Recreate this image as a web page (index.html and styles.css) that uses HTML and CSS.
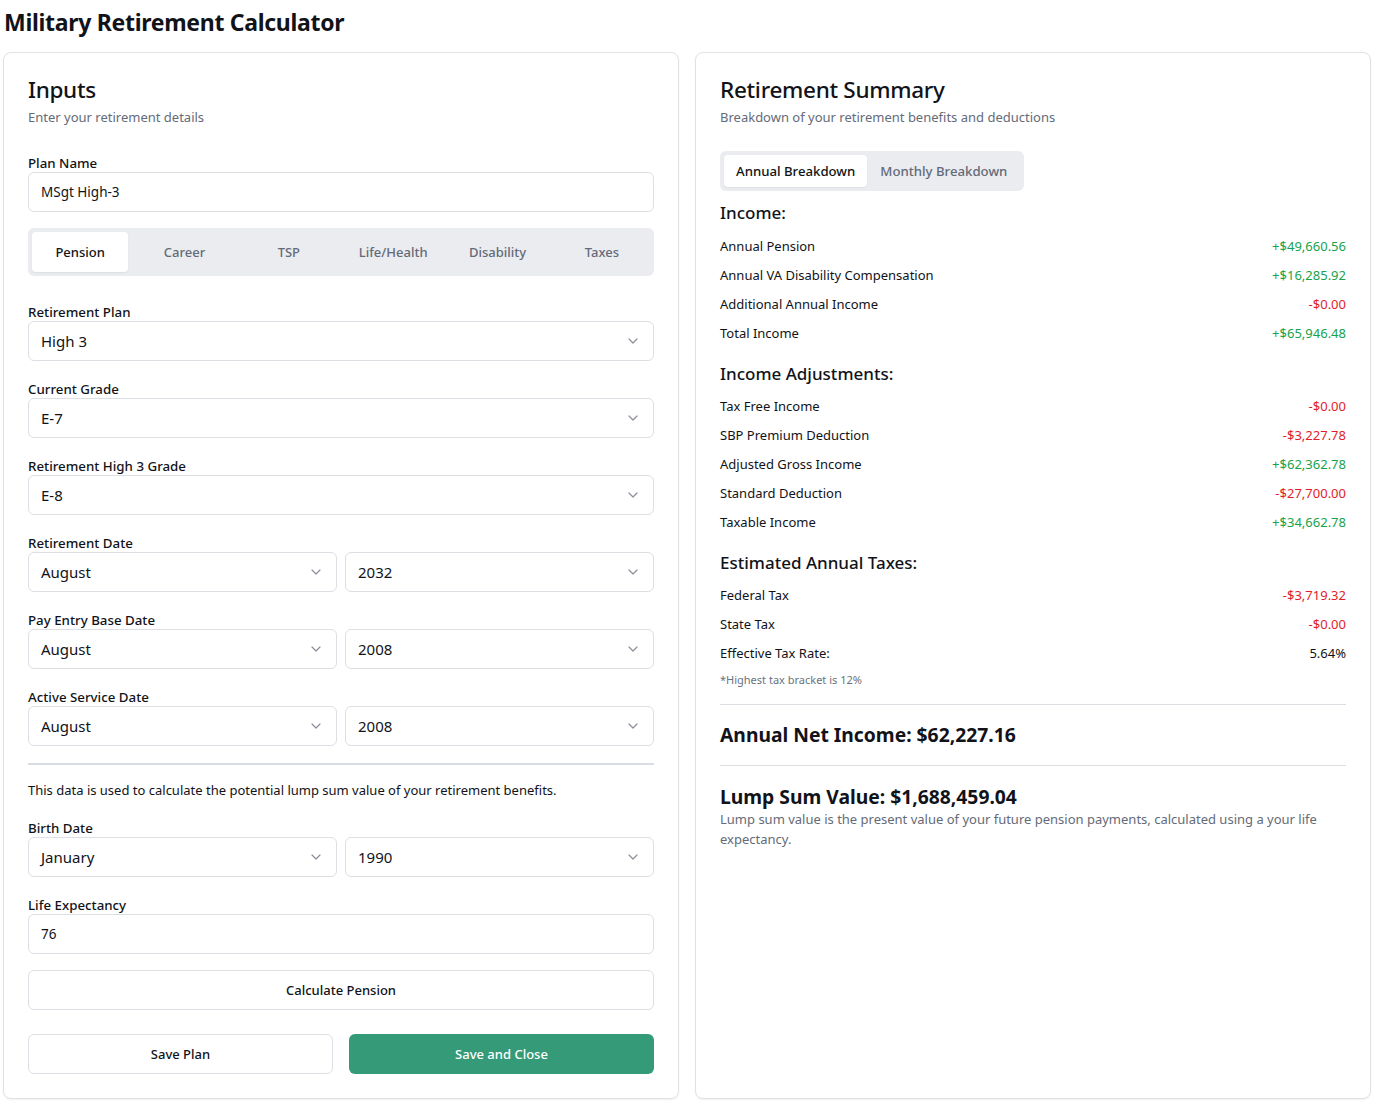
FILE: index.html
```html
<!DOCTYPE html>
<html lang="en">
<head>
<meta charset="utf-8">
<title>Military Retirement Calculator</title>
<link rel="stylesheet" href="styles.css">
</head>
<body>
<div class="page">
  <h1 class="page-title">Military Retirement Calculator</h1>
  <div class="columns">
    <!-- Inputs card -->
    <section class="card">
      <header class="card-header">
        <h2 class="card-title">Inputs</h2>
        <p class="card-desc">Enter your retirement details</p>
      </header>
      <div class="card-body">
        <div class="field">
          <label class="label">Plan Name</label>
          <div class="input text-sm">MSgt High-3</div>
        </div>

        <div class="tabs">
          <button class="tab active">Pension</button>
          <button class="tab">Career</button>
          <button class="tab">TSP</button>
          <button class="tab">Life/Health</button>
          <button class="tab">Disability</button>
          <button class="tab">Taxes</button>
        </div>

        <div class="form">
          <div class="field">
            <label class="label">Retirement Plan</label>
            <div class="input select">High 3<svg class="chev" viewBox="0 0 16 16"><path d="M4 6l4 4 4-4"/></svg></div>
          </div>
          <div class="field">
            <label class="label">Current Grade</label>
            <div class="input select">E-7<svg class="chev" viewBox="0 0 16 16"><path d="M4 6l4 4 4-4"/></svg></div>
          </div>
          <div class="field">
            <label class="label">Retirement High 3 Grade</label>
            <div class="input select">E-8<svg class="chev" viewBox="0 0 16 16"><path d="M4 6l4 4 4-4"/></svg></div>
          </div>
          <div class="field">
            <label class="label">Retirement Date</label>
            <div class="pair">
              <div class="input select">August<svg class="chev" viewBox="0 0 16 16"><path d="M4 6l4 4 4-4"/></svg></div>
              <div class="input select">2032<svg class="chev" viewBox="0 0 16 16"><path d="M4 6l4 4 4-4"/></svg></div>
            </div>
          </div>
          <div class="field">
            <label class="label">Pay Entry Base Date</label>
            <div class="pair">
              <div class="input select">August<svg class="chev" viewBox="0 0 16 16"><path d="M4 6l4 4 4-4"/></svg></div>
              <div class="input select">2008<svg class="chev" viewBox="0 0 16 16"><path d="M4 6l4 4 4-4"/></svg></div>
            </div>
          </div>
          <div class="field">
            <label class="label">Active Service Date</label>
            <div class="pair">
              <div class="input select">August<svg class="chev" viewBox="0 0 16 16"><path d="M4 6l4 4 4-4"/></svg></div>
              <div class="input select">2008<svg class="chev" viewBox="0 0 16 16"><path d="M4 6l4 4 4-4"/></svg></div>
            </div>
          </div>
          <hr class="rule">
          <p class="note">This data is used to calculate the potential lump sum value of your retirement benefits.</p>
          <div class="field">
            <label class="label">Birth Date</label>
            <div class="pair">
              <div class="input select">January<svg class="chev" viewBox="0 0 16 16"><path d="M4 6l4 4 4-4"/></svg></div>
              <div class="input select">1990<svg class="chev" viewBox="0 0 16 16"><path d="M4 6l4 4 4-4"/></svg></div>
            </div>
          </div>
          <div class="field">
            <label class="label">Life Expectancy</label>
            <div class="input text-sm">76</div>
          </div>
        </div>

        <button class="btn outline calc">Calculate Pension</button>
        <div class="actions">
          <button class="btn outline">Save Plan</button>
          <button class="btn primary">Save and Close</button>
        </div>
      </div>
    </section>

    <!-- Summary card -->
    <section class="card">
      <header class="card-header">
        <h2 class="card-title">Retirement Summary</h2>
        <p class="card-desc">Breakdown of your retirement benefits and deductions</p>
      </header>
      <div class="card-body">
        <div class="seg">
          <button class="tab active">Annual Breakdown</button>
          <button class="tab">Monthly Breakdown</button>
        </div>

        <h3 class="group-title">Income:</h3>
        <div class="rows">
          <div class="row"><span>Annual Pension</span><span class="pos">+$49,660.56</span></div>
          <div class="row"><span>Annual VA Disability Compensation</span><span class="pos">+$16,285.92</span></div>
          <div class="row"><span>Additional Annual Income</span><span class="neg">-$0.00</span></div>
          <div class="row"><span>Total Income</span><span class="pos">+$65,946.48</span></div>
        </div>

        <h3 class="group-title">Income Adjustments:</h3>
        <div class="rows">
          <div class="row"><span>Tax Free Income</span><span class="neg">-$0.00</span></div>
          <div class="row"><span>SBP Premium Deduction</span><span class="neg">-$3,227.78</span></div>
          <div class="row"><span>Adjusted Gross Income</span><span class="pos">+$62,362.78</span></div>
          <div class="row"><span>Standard Deduction</span><span class="neg">-$27,700.00</span></div>
          <div class="row"><span>Taxable Income</span><span class="pos">+$34,662.78</span></div>
        </div>

        <h3 class="group-title">Estimated Annual Taxes:</h3>
        <div class="rows">
          <div class="row"><span>Federal Tax</span><span class="neg">-$3,719.32</span></div>
          <div class="row"><span>State Tax</span><span class="neg">-$0.00</span></div>
          <div class="row"><span>Effective Tax Rate:</span><span>5.64%</span></div>
        </div>
        <p class="fine">*Highest tax bracket is 12%</p>

        <div class="total">Annual Net Income: $62,227.16</div>
        <div class="lump">
          <div class="lump-title">Lump Sum Value: $1,688,459.04</div>
          <p class="lump-desc">Lump sum value is the present value of your future pension payments, calculated using a your life expectancy.</p>
        </div>
      </div>
    </section>
  </div>
</div>
</body>
</html>
```

FILE: styles.css
```css
* { box-sizing: border-box; }

html, body {
  margin: 0;
  padding: 0;
  background: #ffffff;
}

body {
  font-family: "Noto Sans", "Open Sans", "Liberation Sans", sans-serif;
  color: #111318;
  font-size: 13px;
}

.page {
  padding: 6px 6px 12px 3px;
}

.page-title {
  margin: 0 0 14px 1px;
  font-size: 23px;
  line-height: 32px;
  font-weight: 700;
  letter-spacing: -0.3px;
}

.columns {
  display: grid;
  grid-template-columns: 1fr 1fr;
  gap: 16px;
}

.card {
  border: 1px solid #dfe2e7;
  border-radius: 8px;
  background: #fff;
  box-shadow: 0 1px 2px rgba(16, 24, 40, 0.06);
}

.card-header {
  padding: 25px 24px 24px;
}

.card-title {
  margin: 0;
  font-size: 22.5px;
  line-height: 24px;
  font-weight: 500;
  letter-spacing: -0.3px;
}

.card-desc {
  margin: 5px 0 0;
  font-size: 13px;
  line-height: 20px;
  color: #646b78;
}

.card-body {
  padding: 1px 24px 24px;
}

/* form fields */
.field {
  display: flex;
  flex-direction: column;
}

.label {
  margin-top: 2px;
  font-size: 13.3px;
  line-height: 18px;
  font-weight: 500;
}

.input {
  height: 40px;
  border: 1px solid #dcdfe4;
  border-radius: 6px;
  padding: 0 12px;
  display: flex;
  align-items: center;
  font-size: 15px;
  background: #fff;
}

.input.text-sm { font-size: 13.5px; }

.select {
  justify-content: space-between;
}

.chev {
  width: 16px;
  height: 16px;
  margin-right: 0;
  fill: none;
  stroke: #8a8f98;
  stroke-width: 1.2;
  stroke-linecap: round;
  stroke-linejoin: round;
}

.pair {
  display: grid;
  grid-template-columns: 1fr 1fr;
  gap: 8px;
}

/* segmented tabs */
.tabs {
  margin-top: 16px;
  height: 48px;
  padding: 4px;
  border-radius: 6px;
  background: #ebecf0;
  display: grid;
  grid-template-columns: repeat(6, 1fr);
  gap: 8px;
}

.tab {
  border: 0;
  background: transparent;
  font-family: inherit;
  font-size: 13px;
  font-weight: 500;
  color: #636a78;
  border-radius: 4px;
  padding: 0 12px;
  cursor: pointer;
}

.tab.active {
  background: #fff;
  color: #111318;
  box-shadow: 0 1px 2px rgba(0, 0, 0, 0.06);
}

.form {
  margin-top: 25px;
  display: flex;
  flex-direction: column;
  gap: 17px;
}

.rule {
  margin: 0;
  border: 0;
  border-top: 2px solid #d9dce1;
}

.note {
  margin: -2px 0 0;
  font-size: 13px;
  line-height: 20px;
}

/* buttons */
.btn {
  height: 40px;
  border-radius: 6px;
  font-family: inherit;
  font-size: 13px;
  font-weight: 500;
  cursor: pointer;
}

.btn.outline {
  border: 1px solid #dcdfe4;
  background: #fff;
  color: #111318;
}

.btn.primary {
  border: 0;
  background: #359a78;
  color: #ffffff;
}

.calc {
  width: 100%;
  margin-top: 16px;
}

.actions {
  margin-top: 24px;
  display: grid;
  grid-template-columns: 1fr 1fr;
  gap: 16px;
}

/* summary */
.seg {
  display: inline-flex;
  margin-top: -1px;
  height: 40px;
  padding: 4px;
  border-radius: 6px;
  background: #ebecf0;
}

.seg .tab {
  padding: 0 12px;
  font-size: 13.2px;
}

.seg .tab + .tab {
  padding: 0 13px 0 13px;
}

.group-title {
  margin: 9px 0 9px;
  font-size: 17px;
  line-height: 26px;
  font-weight: 500;
}

.seg + .group-title { margin-bottom: 10px; }

.rows + .group-title { margin-top: 18px; }

.rows {
  display: flex;
  flex-direction: column;
  gap: 9px;
}

.row {
  display: flex;
  justify-content: space-between;
  font-size: 13px;
  line-height: 20px;
}

.pos { color: #18a24c; }
.neg { color: #e11d2a; }

.fine {
  margin: 9px 0 0;
  font-size: 11px;
  line-height: 16px;
  color: #6b7280;
}

.total {
  margin-top: 16px;
  padding: 16px 0 16px;
  border-top: 1px solid #dadde2;
  border-bottom: 1px solid #dadde2;
  font-size: 19.3px;
  line-height: 28px;
  font-weight: 700;
}

.lump {
  padding-top: 17px;
}

.lump-title {
  font-size: 19.3px;
  line-height: 28px;
  font-weight: 700;
}

.lump-desc {
  margin: -2px 0 0;
  font-size: 13px;
  line-height: 20px;
  color: #646b78;
}
```
